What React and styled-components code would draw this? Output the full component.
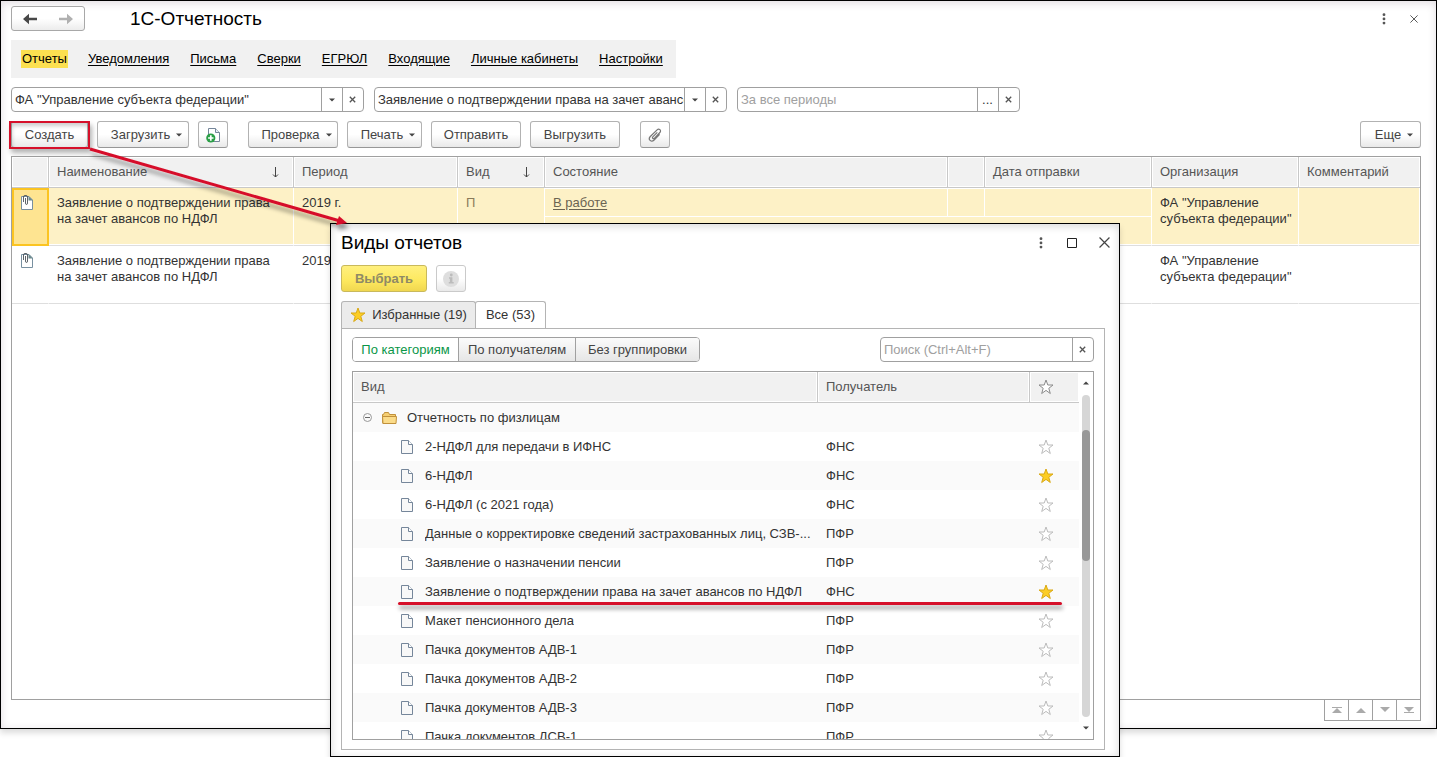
import { useState } from "react";
import styled, { createGlobalStyle, css } from "styled-components";

const GlobalStyle = createGlobalStyle`
  * {
    box-sizing: border-box;
  }
  body {
    margin: 0;
    background: #fff;
    color: #333;
    font-family: "Liberation Sans", Arial, sans-serif;
    font-size: 13px;
    line-height: 16px;
  }
  button, input {
    font: inherit;
    color: inherit;
  }
  svg {
    display: block;
    flex: none;
  }
`

const Page = styled.div`
  position: relative;
  min-height: 100vh;
  padding-bottom: 28px;
  display: flex;
  flex-direction: column;
  overflow: hidden;
`

const MainWindow = styled.main`
  flex: 1;
  display: flex;
  flex-direction: column;
  border: 1px solid #000;
  padding: 5px 15px 7px 10px;
  box-shadow: 0 4px 6px rgba(0, 0, 0, 0.14), inset 0 2px 8px rgba(60, 30, 60, 0.16);
`

const TitleBar = styled.header`
  display: flex;
  align-items: center;
  height: 25px;
`

const NavButtons = styled.div`
  display: flex;
  height: 25px;
  width: 74px;
  margin-right: 45px;
  border: 1px solid #a8a8a8;
  border-radius: 3px;
  background: linear-gradient(#fff 50%, #ececec);
  overflow: hidden;
`

const PlainButton = styled.button`
  display: flex;
  align-items: center;
  justify-content: center;
  flex: ${props => props.$grow ? 1 : "none"};
  padding: 0;
  border: none;
  background: none;
  cursor: pointer;
  & + & {
    border-left: ${props => props.$divided ? "1px solid #c8c8c8" : "none"};
  }
`

const Title = styled.h1`
  flex: 1;
  margin: 0;
  color: #000;
  font-size: 19px;
  font-weight: normal;
  line-height: 24px;
`

const WindowControls = styled.div`
  display: flex;
  align-items: center;
  gap: ${props => props.$gap}px;
  margin-right: 3px;
`

const Sections = styled.nav`
  align-self: flex-start;
  display: flex;
  align-items: center;
  gap: 19px;
  height: 38px;
  margin-top: 9px;
  padding: 0 12px 0 10px;
  background: #f1f1f1;
`

const SectionLink = styled.a`
  padding: 1px;
  color: #000;
  text-decoration: ${props => props.$active ? "none" : "underline"};
  text-underline-offset: 2px;
  background: ${props => props.$active ? "#fce050" : "transparent"};
`

const Filters = styled.div`
  display: flex;
  gap: 10px;
  margin-top: 9px;
`

const FieldBox = styled.div`
  display: flex;
  width: ${props => props.$width}px;
  height: 25px;
  border: 1px solid #a0a0a0;
  border-radius: 4px;
  background: #fff;
  overflow: hidden;
`

const FieldInput = styled.input`
  flex: 1;
  min-width: 0;
  padding: 0 0 0 3px;
  border: none;
  outline: none;
  background: none;
  &::placeholder {
    color: #a0a0a0;
    opacity: 1;
  }
`

const FieldButton = styled.button`
  display: flex;
  align-items: center;
  justify-content: center;
  width: 21px;
  padding: 0 1px 0 0;
  border: none;
  border-left: 1px solid #a0a0a0;
  background: none;
`

const Toolbar = styled.div`
  display: flex;
  gap: 9px;
  margin-top: 9px;
`

const Button = styled.button`
  display: flex;
  align-items: center;
  justify-content: center;
  gap: 6px;
  width: ${props => props.$width}px;
  height: 27px;
  padding: ${props => props.$menu ? "0 0 0 7px" : "0"};
  border: 1px solid #b2b2b2;
  border-bottom-color: #979797;
  border-radius: 3px;
  background: linear-gradient(#fff 50%, #e9e9e9);
  color: #444;
  ${props => props.$primary && css`
    border-color: #c9b95c;
    background: linear-gradient(#fff07e, #fde85e 60%, #f0d750);
    color: #8f8a66;
    font-weight: bold;
  `}
  &:disabled {
    border-color: #cacaca;
  }
`

const Spacer = styled.div`
  flex: ${props => props.$width ? "none" : 1};
  width: ${props => props.$width || 0}px;
`

const Highlighted = styled.div`
  position: relative;
  &::after {
    content: "";
    position: absolute;
    inset: 0 -2px -1px -2px;
    border: 2px solid #d6102a;
    box-shadow: 2px 4px 5px rgba(0, 0, 0, 0.3), inset 1px 3px 4px rgba(0, 0, 0, 0.2);
    pointer-events: none;
  }
`

const Grid = styled.div`
  flex: 1;
  margin-top: 8px;
  border: 1px solid #a0a0a0;
`

const Table = styled.table`
  width: 100%;
  table-layout: fixed;
  border-collapse: separate;
  border-spacing: 0;
`

const HeadCell = styled.th`
  height: 31px;
  padding: 0 8px;
  text-align: left;
  font-weight: normal;
  color: #555;
  background: #f1f1f1;
  border-right: 1px solid #c8c8c8;
  border-bottom: 1px solid #c8c8c8;
  box-shadow: inset 0 0 0 1px #fff;
  &:last-child {
    border-right: none;
  }
`

const HeadContent = styled.div`
  display: flex;
  align-items: center;
  justify-content: space-between;
  padding-right: 6px;
`

const Cell = styled.td`
  height: ${props => props.$half ? 29 : 58}px;
  padding: 7px ${props => props.$tight ? 4 : 8}px 0 8px;
  vertical-align: top;
  color: ${props => props.$muted ? "#8a7a5a" : "#333"};
  background: ${props => props.$selected ? "#fdf1c6" : "#fff"};
  border-right: 1px solid #fff;
  border-bottom: 1px solid ${props => props.$split ? "#fff" : "#dedede"};
  box-shadow: inset 0 ${props => props.$split ? 1 : -1}px 0 #fff;
`

const MarkCell = styled(Cell)`
  padding: 7px 0 0 9px;
  ${props => props.$selected && css`
    padding: 5px 0 0 7px;
    background: #fee491;
    border: 2px solid #fbc422;
    box-shadow: none;
  `}
`

const StateLink = styled.a`
  color: #6b6452;
  text-underline-offset: 2px;
`

const Pager = styled.div`
  display: flex;
  align-self: flex-end;
`

const PagerButton = styled.button`
  display: flex;
  align-items: center;
  justify-content: center;
  width: 25px;
  height: 21px;
  padding: 0;
  border: 1px solid #a0a0a0;
  border-top: none;
  background: #fff;
  & + & {
    margin-left: -1px;
  }
`

const Dialog = styled.section`
  position: absolute;
  top: 223px;
  right: 317px;
  bottom: 0;
  left: 330px;
  display: flex;
  flex-direction: column;
  padding: 6px 14px 6px 10px;
  border: 1px solid #000;
  background: #fff;
  box-shadow: 0 4px 6px rgba(0, 0, 0, 0.14), inset 0 2px 8px rgba(0, 0, 0, 0.16);
`

const DialogTitle = styled(TitleBar)`
  margin-right: -8px;
`

const DialogActions = styled.div`
  display: flex;
  gap: 9px;
  margin-top: 10px;
`

const Tabs = styled.div`
  display: flex;
  margin-top: 9px;
`

const Tab = styled.button`
  display: flex;
  align-items: center;
  justify-content: center;
  gap: 6px;
  width: ${props => props.$width}px;
  height: ${props => props.$active ? 28 : 27}px;
  margin-bottom: ${props => props.$active ? -1 : 0}px;
  padding: 0 0 ${props => props.$active ? 2 : 0}px;
  border: 1px solid #b4b4b4;
  border-bottom: none;
  border-radius: 3px 3px 0 0;
  background: ${props => props.$active ? "#fff" : "#ebebeb"};
  & + & {
    margin-left: -1px;
  }
`

const Panel = styled.div`
  flex: 1;
  min-height: 0;
  display: flex;
  flex-direction: column;
  padding: 8px 10px 9px;
  border: 1px solid #b4b4b4;
`

const PanelBar = styled.div`
  display: flex;
  justify-content: space-between;
`

const Segments = styled.div`
  display: flex;
  height: 25px;
  border: 1px solid #a0a0a0;
  border-radius: 4px;
  overflow: hidden;
`

const Segment = styled.button`
  width: ${props => props.$width}px;
  padding: 0;
  border: none;
  background: ${props => props.$active ? "#fff" : "linear-gradient(#fbfbfb, #e6e6e6)"};
  color: ${props => props.$active ? "#0a9648" : "#444"};
  & + & {
    border-left: 1px solid #a0a0a0;
  }
`

const ListBox = styled.div`
  flex: 1;
  min-height: 0;
  display: flex;
  margin-top: 9px;
  border: 1px solid #a0a0a0;
`

const ListRows = styled.div`
  flex: 1;
  min-width: 0;
  overflow: hidden;
`

const ListRow = styled.tr`
  height: 29px;
  &:nth-child(odd) {
    background: #fafafa;
  }
`

const ListCell = styled.td`
  padding: 0 0 0 8px;
`

const ListName = styled.div`
  display: flex;
  align-items: center;
  gap: ${props => props.$group ? 10 : 12}px;
  padding-left: ${props => props.$group ? 2 : 40}px;
`

const Ellipsis = styled.span`
  overflow: hidden;
  text-overflow: ellipsis;
  white-space: nowrap;
`

const Scroll = styled.div`
  display: flex;
  flex-direction: column;
  align-items: center;
  width: 14px;
  padding: 9px 0 9px;
`

const Track = styled.div`
  flex: 1;
  width: 8px;
  margin: 10px 0 9px;
  padding-top: 35px;
  border-radius: 4px;
  background: #d6d6d6;
`

const Thumb = styled.div`
  height: 131px;
  border-radius: 4px;
  background: #989898;
`

const Underline = styled.div`
  position: absolute;
  top: 378px;
  right: 57px;
  left: 67px;
  height: 3px;
  border-radius: 2px;
  background: #d6102a;
  box-shadow: 1px 4px 4px rgba(0, 0, 0, 0.4);
`

const ArrowLayer = styled.svg`
  position: absolute;
  top: 140px;
  left: 80px;
  pointer-events: none;
`

function Caret({ up, color = "#444", width = 6 }) {
  return (
    <svg width={width} height="4" viewBox="0 0 8 4" aria-hidden="true">
      <path d={up ? "M0 4h8L4 0z" : "M0 0h8L4 4z"} fill={color} />
    </svg>
  );
}

function SmallCross() {
  return (
    <svg width="7" height="7" viewBox="0 0 7 7" stroke="#555" strokeWidth="1.3">
      <path d="M.8.8l5.4 5.4M6.2.8L.8 6.2" />
    </svg>
  );
}

function Dots() {
  return (
    <svg width="4" height="12" viewBox="0 0 4 12" fill="#555">
      <circle cx="2" cy="1.7" r="1.4" />
      <circle cx="2" cy="5.9" r="1.4" />
      <circle cx="2" cy="10.1" r="1.4" />
    </svg>
  );
}

function Cross({ size }) {
  return (
    <svg width={size} height={size} viewBox="0 0 10 10" stroke="#444" strokeWidth="1.1">
      <path d="M.5.5l9 9M9.5.5l-9 9" />
    </svg>
  );
}

function NavArrow({ forward }) {
  return (
    <svg width="14" height="12" viewBox="0 0 14 12">
      <path
        d={forward ? "M14 6L8 0.8v3.9H0v2.6h8v3.9z" : "M0 6L6 0.8v3.9h8v2.6H6v3.9z"}
        fill={forward ? "#b0b0b0" : "#484848"}
      />
    </svg>
  );
}

function SortArrow() {
  return (
    <svg width="7" height="11" viewBox="0 0 7 11" fill="none" stroke="#444">
      <path d="M3.5 0v10M1 7.5L3.5 10 6 7.5" />
    </svg>
  );
}

function Star({ filled, dark }) {
  return (
    <svg width="16" height="16" viewBox="0 0 16 16">
      <path
        d="M8 1l1.8 5H15l-4.2 3.3 1.5 5.2L8 11.4l-4.3 3.1 1.5-5.2L1 6h5.2z"
        fill={filled ? "#fccd24" : "#fff"}
        stroke={filled ? "#d9a916" : dark ? "#8a8a8a" : "#bcbcbc"}
      />
    </svg>
  );
}

function FileIcon() {
  return (
    <svg width="12" height="14" viewBox="0 0 12 14" fill="#f8f8f8" stroke="#75869a">
      <path d="M.5.5h7l4 4v9H.5z" />
      <path d="M7.5.5v4h4" fill="#fff" />
    </svg>
  );
}

function AddFileIcon() {
  return (
    <svg width="14" height="16" viewBox="0 0 14 16">
      <path d="M2.5 8V1.5h7l4 4v9H7" fill="#fff" stroke="#75869a" />
      <path d="M9.5 1.5v4h4" fill="#e8edf2" stroke="#75869a" />
      <circle cx="4.8" cy="11" r="4.6" fill="#2b9f47" />
      <path d="M4.8 8.3v5.4M2.1 11h5.4" stroke="#fff" strokeWidth="1.7" />
    </svg>
  );
}

function AttachedFile() {
  return (
    <svg width="12" height="15" viewBox="0 0 12 15" fill="none">
      <path d="M.5 1.5h7.5l3.5 3.5v9.5H.5z" fill="#fff" stroke="#7890a0" />
      <path d="M7.5 1l4.5 4.5H7.5z" fill="#6d8a8e" />
      <path d="M2.5 7V2q0-1.5 1.5-1.5h1Q6.5.5 6.5 2v6q0 1.500-1 1.500T4.500 8V3" stroke="#4c5258" strokeWidth=".9" />
    </svg>
  );
}

function Clip() {
  return (
    <svg width="14" height="14" viewBox="0 0 14 14" fill="none" stroke="#777" strokeWidth="1.2">
      <path d="M9.3 4.3L4.8 8.9c-1 1 .4 2.4 1.500 1.400l5.600-5.800c1.900-2-.9-4.600-2.800-2.700L2.300 8.500c-2.700 2.900 1 6.400 3.800 3.500l5.600-5.600" />
    </svg>
  );
}

function InfoIcon() {
  return (
    <svg width="16" height="16" viewBox="0 0 16 16">
      <circle cx="8" cy="8" r="8" fill="#dedede" />
      <circle cx="8.3" cy="4" r="1.4" fill="#bcbcbc" />
      <path d="M6 6.3h3.4V11h1.3v1.4H5.8V11h1.1V7.7H6z" fill="#bcbcbc" />
    </svg>
  );
}

function FolderIcon() {
  return (
    <svg width="15" height="13" viewBox="0 0 15 13" stroke="#c1913c">
      <path d="M.5 11.5v-8h1l1-2h4l1 2h6v8q0 1-1 1h-11q-1 0-1-1z" fill="#f6cf72" />
      <path d="M.5 5.5h14l-.5 7H1z" fill="#fbdc8a" />
    </svg>
  );
}

function CollapseIcon() {
  return (
    <svg width="9" height="9" viewBox="0 0 9 9" fill="none" stroke="#999">
      <circle cx="4.5" cy="4.5" r="4" />
      <path d="M2 4.5h5" stroke="#666" />
    </svg>
  );
}

function PagerIcon({ up, bar }) {
  return (
    <svg width="10" height="8" viewBox="0 0 10 8" fill="#aaa">
      <path d={up ? "M0 7h10L5 2z" : "M0 1h10L5 6z"} />
      {bar && <path d={up ? "M0 1h10v1H0z" : "M0 6h10v1H0z"} />}
    </svg>
  );
}

function Field({ label, width, initial = "", placeholder, picker }) {
  const [value, setValue] = useState(initial);

  return (
    <FieldBox $width={width}>
      <FieldInput
        type="text"
        aria-label={label}
        placeholder={placeholder}
        value={value}
        onChange={(e) => setValue(e.target.value)}
      />
      {picker === "list" && <FieldButton aria-label="Выбрать из списка"><Caret /></FieldButton>}
      {picker === "dots" && <FieldButton>...</FieldButton>}
      <FieldButton aria-label="Очистить" onClick={() => setValue("")}><SmallCross /></FieldButton>
    </FieldBox>
  );
}

const sections = ["Отчеты", "Уведомления", "Письма", "Сверки", "ЕГРЮЛ", "Входящие", "Личные кабинеты", "Настройки"];

const columns = [
  { title: "", width: 37 },
  { title: "Наименование", width: 245, sorted: true },
  { title: "Период", width: 164 },
  { title: "Вид", width: 87, sorted: true },
  { title: "Состояние" },
  { title: "", width: 37 },
  { title: "Дата отправки", width: 167 },
  { title: "Организация", width: 147 },
  { title: "Комментарий", width: 121 },
];

const reports = [
  { id: 1, period: "2019 г.", kind: "П", state: "В работе" },
  { id: 2, period: "2019 г.", kind: "П", state: "В работе" },
];

const kinds = [
  { name: "2-НДФЛ для передачи в ИФНС", to: "ФНС" },
  { name: "6-НДФЛ", to: "ФНС", starred: true },
  { name: "6-НДФЛ (с 2021 года)", to: "ФНС" },
  { name: "Данные о корректировке сведений застрахованных лиц, СЗВ-...", to: "ПФР" },
  { name: "Заявление о назначении пенсии", to: "ПФР" },
  { name: "Заявление о подтверждении права на зачет авансов по НДФЛ", to: "ФНС", starred: true },
  { name: "Макет пенсионного дела", to: "ПФР" },
  { name: "Пачка документов АДВ-1", to: "ПФР" },
  { name: "Пачка документов АДВ-2", to: "ПФР" },
  { name: "Пачка документов АДВ-3", to: "ПФР" },
  { name: "Пачка документов ДСВ-1", to: "ПФР" },
];

function ReportRows({ report, selected }) {
  return (
    <>
      <tr>
        <MarkCell rowSpan={2} $selected={selected}><AttachedFile /></MarkCell>
        <Cell rowSpan={2} $selected={selected}>Заявление о подтверждении права на зачет авансов по НДФЛ</Cell>
        <Cell rowSpan={2} $selected={selected}>{report.period}</Cell>
        <Cell rowSpan={2} $selected={selected} $muted>{report.kind}</Cell>
        <Cell $half $split $selected={selected}><StateLink href="#state">{report.state}</StateLink></Cell>
        <Cell $half $split $selected={selected} />
        <Cell $half $split $selected={selected} />
        <Cell rowSpan={2} $tight $selected={selected}>ФА "Управление субъекта федерации"</Cell>
        <Cell rowSpan={2} $selected={selected} />
      </tr>
      <tr>
        <Cell $half colSpan={3} $selected={selected} />
      </tr>
    </>
  );
}

function KindsDialog() {
  const [stars, setStars] = useState(kinds.map(kind => !!kind.starred));

  function toggle(index) {
    setStars(stars.map((on, i) => i === index ? !on : on));
  }

  return (
    <Dialog role="dialog" aria-label="Виды отчетов">
      <DialogTitle>
        <Title as="h2">Виды отчетов</Title>
        <WindowControls $gap={20}>
          <PlainButton aria-label="Меню"><Dots /></PlainButton>
          <PlainButton aria-label="Развернуть">
            <svg width="16" height="10" viewBox="0 0 16 10" fill="none" stroke="#222">
              <path d="M4.5.5h9v9h-9z" />
            </svg>
          </PlainButton>
          <PlainButton aria-label="Закрыть"><Cross size={11} /></PlainButton>
        </WindowControls>
      </DialogTitle>
      <DialogActions>
        <Button $width={86} $primary>Выбрать</Button>
        <Button $width={30} disabled aria-label="Сведения"><InfoIcon /></Button>
      </DialogActions>
      <Tabs role="tablist">
        <Tab role="tab" $width={135}><Star filled />Избранные (19)</Tab>
        <Tab role="tab" aria-selected="true" $width={71} $active>Все (53)</Tab>
      </Tabs>
      <Panel>
        <PanelBar>
          <Segments>
            <Segment $width={105} $active>По категориям</Segment>
            <Segment $width={117}>По получателям</Segment>
            <Segment $width={124}>Без группировки</Segment>
          </Segments>
          <Field label="Поиск" width={214} placeholder="Поиск (Ctrl+Alt+F)" />
        </PanelBar>
        <ListBox>
          <ListRows>
            <Table>
              <colgroup>
                <col />
                <col width="212" />
                <col width="49" />
              </colgroup>
              <thead>
                <tr>
                  <HeadCell>Вид</HeadCell>
                  <HeadCell>Получатель</HeadCell>
                  <HeadCell><Star dark /></HeadCell>
                </tr>
              </thead>
              <tbody>
                <ListRow>
                  <ListCell>
                    <ListName $group>
                      <PlainButton aria-label="Свернуть группу"><CollapseIcon /></PlainButton>
                      <FolderIcon />
                      <Ellipsis>Отчетность по физлицам</Ellipsis>
                    </ListName>
                  </ListCell>
                  <ListCell />
                  <ListCell />
                </ListRow>
                {kinds.map((kind, i) => (
                  <ListRow key={kind.name}>
                    <ListCell>
                      <ListName><FileIcon /><Ellipsis>{kind.name}</Ellipsis></ListName>
                    </ListCell>
                    <ListCell>{kind.to}</ListCell>
                    <ListCell>
                      <PlainButton aria-label="В избранное" onClick={() => toggle(i)}>
                        <Star filled={stars[i]} />
                      </PlainButton>
                    </ListCell>
                  </ListRow>
                ))}
              </tbody>
            </Table>
          </ListRows>
          <Scroll>
            <Caret up />
            <Track><Thumb /></Track>
            <Caret />
          </Scroll>
        </ListBox>
      </Panel>
      <Underline />
    </Dialog>
  );
}

export default function App() {
  return (
    <Page>
      <GlobalStyle />
      <MainWindow>
        <TitleBar>
          <NavButtons>
            <PlainButton $grow $divided aria-label="Назад"><NavArrow /></PlainButton>
            <PlainButton $grow $divided aria-label="Вперед"><NavArrow forward /></PlainButton>
          </NavButtons>
          <Title>1С-Отчетность</Title>
          <WindowControls $gap={24}>
            <PlainButton aria-label="Меню"><Dots /></PlainButton>
            <PlainButton aria-label="Закрыть"><Cross size={8} /></PlainButton>
          </WindowControls>
        </TitleBar>

        <Sections>
          {sections.map((name, i) => (
            <SectionLink key={name} href="#section" $active={i === 0}>{name}</SectionLink>
          ))}
        </Sections>

        <Filters>
          <Field label="Организация" width={353} initial={'ФА "Управление субъекта федерации"'} picker="list" />
          <Field label="Вид отчета" width={353} initial="Заявление о подтверждении права на зачет авансов по НДФЛ" picker="list" />
          <Field label="Период" width={283} placeholder="За все периоды" picker="dots" />
        </Filters>

        <Toolbar>
          <Highlighted><Button $width={77}>Создать</Button></Highlighted>
          <Button $width={92} $menu>Загрузить <Caret /></Button>
          <Button $width={30} aria-label="Добавить файл"><AddFileIcon /></Button>
          <Spacer $width={2} />
          <Button $width={90} $menu>Проверка <Caret /></Button>
          <Button $width={75} $menu>Печать <Caret /></Button>
          <Button $width={90}>Отправить</Button>
          <Button $width={90}>Выгрузить</Button>
          <Spacer $width={2} />
          <Button $width={30} aria-label="Вложения"><Clip /></Button>
          <Spacer />
          <Button $width={61} $menu>Еще <Caret /></Button>
        </Toolbar>

        <Grid>
          <Table>
            <colgroup>
              {columns.map((column, i) => <col key={i} width={column.width} />)}
            </colgroup>
            <thead>
              <tr>
                {columns.map((column, i) => (
                  <HeadCell key={i}>
                    <HeadContent>
                      {column.title}
                      {column.sorted && <SortArrow />}
                    </HeadContent>
                  </HeadCell>
                ))}
              </tr>
            </thead>
            <tbody>
              {reports.map((report, i) => (
                <ReportRows key={report.id} report={report} selected={i === 0} />
              ))}
            </tbody>
          </Table>
        </Grid>
        <Pager>
          <PagerButton aria-label="В начало"><PagerIcon up bar /></PagerButton>
          <PagerButton aria-label="Вверх"><PagerIcon up /></PagerButton>
          <PagerButton aria-label="Вниз"><PagerIcon /></PagerButton>
          <PagerButton aria-label="В конец"><PagerIcon bar /></PagerButton>
        </Pager>
      </MainWindow>

      <KindsDialog />

      <ArrowLayer width="280" height="100" viewBox="0 0 280 100">
        <defs>
          <filter id="arrowShadow" x="-10%" y="-10%" width="120%" height="140%">
            <feDropShadow dx="2" dy="5" stdDeviation="2" floodOpacity="0.4" />
          </filter>
        </defs>
        <g filter="url(#arrowShadow)" fill="#d6102a" stroke="#d6102a">
          <path d="M10 9L260 81" strokeWidth="3" />
          <path d="M267 83L256 85 259 76z" strokeWidth="0" />
        </g>
      </ArrowLayer>
    </Page>
  );
}
